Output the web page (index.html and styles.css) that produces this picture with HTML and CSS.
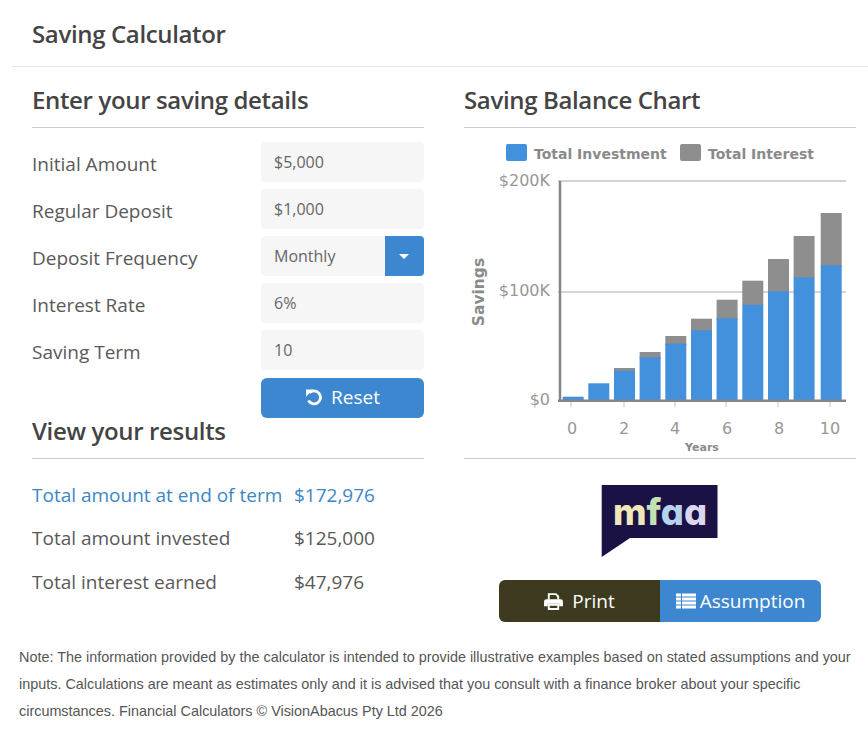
FILE: index.html
```html
<!DOCTYPE html>
<html lang="en">
<head>
    <meta charset="UTF-8">
    <meta name="viewport" content="width=device-width, initial-scale=1.0">
    <title>Saving Calculator</title>
    <link rel="stylesheet" href="styles.css">
</head>

<body>

    <header class="page-header">
        <h1>Saving Calculator</h1>
    </header>

    <main class="columns">
        <section class="col-left">
            <h2>Enter your saving details</h2>
            <form class="details-form">
                <label class="form-row">
                    <span class="form-label">Initial Amount</span>
                    <input type="text" value="$5,000">
                </label>
                <label class="form-row">
                    <span class="form-label">Regular Deposit</span>
                    <input type="text" value="$1,000">
                </label>
                <label class="form-row">
                    <span class="form-label">Deposit Frequency</span>
                    <span class="select-box">
                        <span class="select-value">Monthly</span>
                        <span class="select-caret"></span>
                    </span>
                </label>
                <label class="form-row">
                    <span class="form-label">Interest Rate</span>
                    <input type="text" value="6%">
                </label>
                <label class="form-row">
                    <span class="form-label">Saving Term</span>
                    <input type="text" value="10">
                </label>
                <div class="form-row reset-row">
                    <button type="button" class="btn-reset">
                        <svg class="icon-reset" viewBox="0 0 20 20" width="18" height="18">
                            <path d="M4.8 5.4 A7.2 7.2 0 1 1 3.8 14" fill="none" stroke="#fff" stroke-width="3.2"/>
                            <path d="M1.2 1.8 L9 1.8 L1.2 9.6 Z" fill="#fff"/>
                        </svg>
                        Reset
                    </button>
                </div>
            </form>

            <h2 class="results-title">View your results</h2>
            <div class="results">
                <div class="result-row result-main"><span>Total amount at end of term</span><span>$172,976</span></div>
                <div class="result-row"><span>Total amount invested</span><span>$125,000</span></div>
                <div class="result-row"><span>Total interest earned</span><span>$47,976</span></div>
            </div>
        </section>

        <section class="col-right">
            <h2>Saving Balance Chart</h2>
            <div class="chart-box">
                <svg class="chart" width="392" height="330" viewBox="464 128 392 330">
                    <!-- legend -->
                    <rect x="506" y="144" width="21" height="17" rx="2" fill="#4390dc"/>
                    <text x="534" y="159" class="legend">Total Investment</text>
                    <rect x="680" y="144" width="21" height="17" rx="2" fill="#8e8e8e"/>
                    <text x="708" y="159" class="legend">Total Interest</text>

                    <!-- grid -->
                    <line x1="558" y1="181" x2="846" y2="181" stroke="#c4c4c4" stroke-width="1.5"/>
                    <line x1="558" y1="292" x2="846" y2="292" stroke="#c8c8c8" stroke-width="1.5"/>

                    <!-- interest -->
                    <g fill="#8e8e8e">
                        <rect x="614" y="368" width="21" height="4"/>
                        <rect x="639.6" y="352" width="21" height="7"/>
                        <rect x="665.3" y="336" width="21" height="9"/>
                        <rect x="691" y="318.7" width="21" height="13"/>
                        <rect x="716.6" y="299.7" width="21" height="20"/>
                        <rect x="742.3" y="280.7" width="21" height="25"/>
                        <rect x="768" y="259" width="21" height="33"/>
                        <rect x="793.6" y="236" width="21" height="42"/>
                        <rect x="820.7" y="213" width="21" height="53"/>
                    </g>

                    <!-- investment -->
                    <g fill="#4390dc">
                        <rect x="562.7" y="396.7" width="21" height="3.3"/>
                        <rect x="588.3" y="383.3" width="21" height="16.7"/>
                        <rect x="614" y="370.7" width="21" height="29.3"/>
                        <rect x="639.6" y="357.3" width="21" height="42.7"/>
                        <rect x="665.3" y="343.7" width="21" height="56.3"/>
                        <rect x="691" y="330.3" width="21" height="69.7"/>
                        <rect x="716.6" y="318.3" width="21" height="81.7"/>
                        <rect x="742.3" y="304.7" width="21" height="95.3"/>
                        <rect x="768" y="291.3" width="21" height="108.7"/>
                        <rect x="793.6" y="277.5" width="21" height="122.5"/>
                        <rect x="820.7" y="265.3" width="21" height="134.7"/>
                    </g>

                    <!-- axes -->
                    <line x1="560" y1="181" x2="560" y2="402" stroke="#858585" stroke-width="2.5"/>
                    <line x1="558" y1="400.7" x2="846" y2="400.7" stroke="#858585" stroke-width="2.5"/>
                    <g stroke="#c4c4c4">
                        <line x1="571" y1="402" x2="571" y2="407"/>
                        <line x1="624" y1="402" x2="624" y2="407"/>
                        <line x1="675" y1="402" x2="675" y2="407"/>
                        <line x1="726" y1="402" x2="726" y2="407"/>
                        <line x1="778" y1="402" x2="778" y2="407"/>
                        <line x1="830" y1="402" x2="830" y2="407"/>
                    </g>

                    <!-- labels -->
                    <g class="tick" text-anchor="end">
                        <text x="550" y="186">$200K</text>
                        <text x="550" y="296">$100K</text>
                        <text x="550" y="405">$0</text>
                    </g>
                    <g class="tick" text-anchor="middle">
                        <text x="572" y="434">0</text>
                        <text x="624" y="434">2</text>
                        <text x="675" y="434">4</text>
                        <text x="727" y="434">6</text>
                        <text x="779" y="434">8</text>
                        <text x="830" y="434">10</text>
                    </g>
                    <text x="702" y="451" text-anchor="middle" class="axis-x">Years</text>
                    <text x="484" y="292" text-anchor="middle" transform="rotate(-90 484 292)" class="axis-y">Savings</text>
                </svg>
            </div>

            <svg class="logo" width="118" height="73" viewBox="0 0 118 73">
                <path d="M0.7 0 H116.5 V53 H29 L0.7 72 Z" fill="#1a1145"/>
                <text x="12" y="40" class="logo-text" textLength="94" lengthAdjust="spacingAndGlyphs"><tspan fill="#f0e6b8">m</tspan><tspan fill="#c5e0b4">f</tspan><tspan fill="#b5d3ec">a</tspan><tspan fill="#dcd6ee">a</tspan></text>
            </svg>

            <div class="action-buttons">
                <button type="button" class="btn-print">
                    <svg viewBox="0 0 20 18" width="19" height="17">
                        <path d="M5 7 V1.2 H12.5 L15 3.7 V7" fill="none" stroke="#fff" stroke-width="2"/>
                        <path d="M2.5 6.5 H17.5 Q20 6.5 20 9 V14 H16 V11.5 H4 V14 H0 V9 Q0 6.5 2.5 6.5 Z" fill="#fff"/>
                        <path d="M5 12.5 H15 V17 H5 Z" fill="none" stroke="#fff" stroke-width="2"/>
                    </svg>
                    Print
                </button>
                <button type="button" class="btn-assumption">
                    <svg viewBox="0 0 20 16" width="20" height="16">
                        <path d="M0 0.5 H20 V3.5 H0 Z M0 4.5 H20 V7.5 H0 Z M0 8.5 H20 V11.5 H0 Z M0 12.5 H20 V15.5 H0 Z" fill="#fff"/>
                        <path d="M5.5 0 V16" stroke="#3d87d0" stroke-width="1"/>
                    </svg>
                    Assumption
                </button>
            </div>
        </section>
    </main>

    <p class="note">Note: The information provided by the calculator is intended to provide illustrative examples based on stated assumptions and your inputs. Calculations are meant as estimates only and it is advised that you consult with a finance broker about your specific circumstances. Financial Calculators © VisionAbacus Pty Ltd 2026</p>

</body>
</html>
```

FILE: styles.css
```css
* {
    margin: 0;
    padding: 0;
    box-sizing: border-box;
}

body {
    font-family: "Open Sans", Arial, sans-serif;
    color: #555;
    background-color: #fff;
}

.page-header {
    margin-left: 12px;
    height: 67px;
    padding: 16px 0 0 20px;
    border-bottom: 1px solid #e5e5e5;
}

h1 {
    font-size: 24px;
    line-height: 36px;
    font-weight: 600;
    letter-spacing: -0.35px;
    color: #444;
}

h2 {
    font-size: 24px;
    line-height: 34px;
    font-weight: 600;
    letter-spacing: -0.35px;
    color: #444;
    height: 61px;
    padding-top: 16px;
    border-bottom: 1px solid #ccc;
}

.columns {
    display: grid;
    grid-template-columns: 392px 392px;
    column-gap: 40px;
    padding-left: 32px;
}

/* Form */
.details-form {
    display: flex;
    flex-direction: column;
    gap: 7px;
    padding-top: 14px;
}

.form-row {
    display: grid;
    grid-template-columns: 229px 163px;
    align-items: center;
    height: 40px;
    font-size: 19px;
    color: #595959;
}

.form-label {
    padding-top: 4px;
}

.form-row input,
.select-box {
    height: 40px;
    border: none;
    border-radius: 4px;
    background-color: #f6f6f6;
    font-family: "Open Sans", Arial, sans-serif;
    font-size: 16px;
    color: #666;
}

.form-row input {
    width: 100%;
    padding: 0 0 1px 13px;
}

.select-box {
    display: flex;
    justify-content: space-between;
}

.select-value {
    padding: 9px 0 0 13px;
}

.select-caret {
    position: relative;
    width: 39px;
    background-color: #3d87d0;
    border-radius: 0 4px 4px 0;
}

.select-caret::after {
    content: "";
    position: absolute;
    left: 14px;
    top: 18px;
    border-top: 5px solid #fff;
    border-left: 5px solid transparent;
    border-right: 5px solid transparent;
}

.reset-row {
    margin-top: 1px;
}

.btn-reset {
    grid-column: 2;
    height: 40px;
    display: flex;
    align-items: center;
    justify-content: center;
    gap: 8px;
    padding-bottom: 3px;
    border: none;
    border-radius: 6px;
    background-color: #3d87d0;
    color: #fff;
    font-family: "Open Sans", Arial, sans-serif;
    font-size: 19px;
}

/* Results */
.results-title {
    margin-top: -7px;
    height: 48px;
    padding-top: 3px;
}

.results {
    padding-top: 15px;
}

.result-row {
    display: grid;
    grid-template-columns: 262px 130px;
    height: 43.5px;
    align-items: center;
    padding-bottom: 2px;
    font-size: 19px;
    color: #595959;
}

.result-main {
    color: #3d87c5;
}

/* Chart */
.chart-box {
    height: 331px;
    border-bottom: 1px solid #ccc;
}

.chart {
    display: block;
}

.legend {
    font-family: "DejaVu Sans", sans-serif;
    font-size: 14px;
    font-weight: 700;
    fill: #8a8a8a;
}

.tick text {
    font-family: "DejaVu Sans", sans-serif;
    font-size: 16px;
    fill: #979797;
}

.axis-x {
    font-family: "DejaVu Sans", sans-serif;
    font-size: 11px;
    font-weight: 700;
    fill: #8a8a8a;
}

.axis-y {
    font-family: "DejaVu Sans", sans-serif;
    font-size: 15.5px;
    font-weight: 700;
    fill: #8a8a8a;
}

.logo {
    display: block;
    margin: 26px 0 0 137px;
}

.logo-text {
    font-family: Inter, sans-serif;
    font-size: 37px;
    font-weight: 800;
    font-feature-settings: "cv11";
}

.action-buttons {
    display: flex;
    margin: 22px 0 0 35px;
}

.action-buttons button {
    width: 161px;
    height: 42px;
    display: flex;
    align-items: center;
    justify-content: center;
    border: none;
    color: #fff;
    font-family: "Open Sans", Arial, sans-serif;
    font-size: 19px;
}

.btn-print {
    gap: 9px;
    background-color: #3d3a1f;
    border-radius: 6px 0 0 6px;
}

.btn-assumption {
    gap: 4px;
    background-color: #3d87d0;
    border-radius: 0 6px 6px 0;
}

/* Note */
.note {
    margin: 22px 0 0 19px;
    width: 840px;
    font-family: "Liberation Sans", Arial, sans-serif;
    font-size: 14.4px;
    line-height: 27px;
    color: #555;
}
```
